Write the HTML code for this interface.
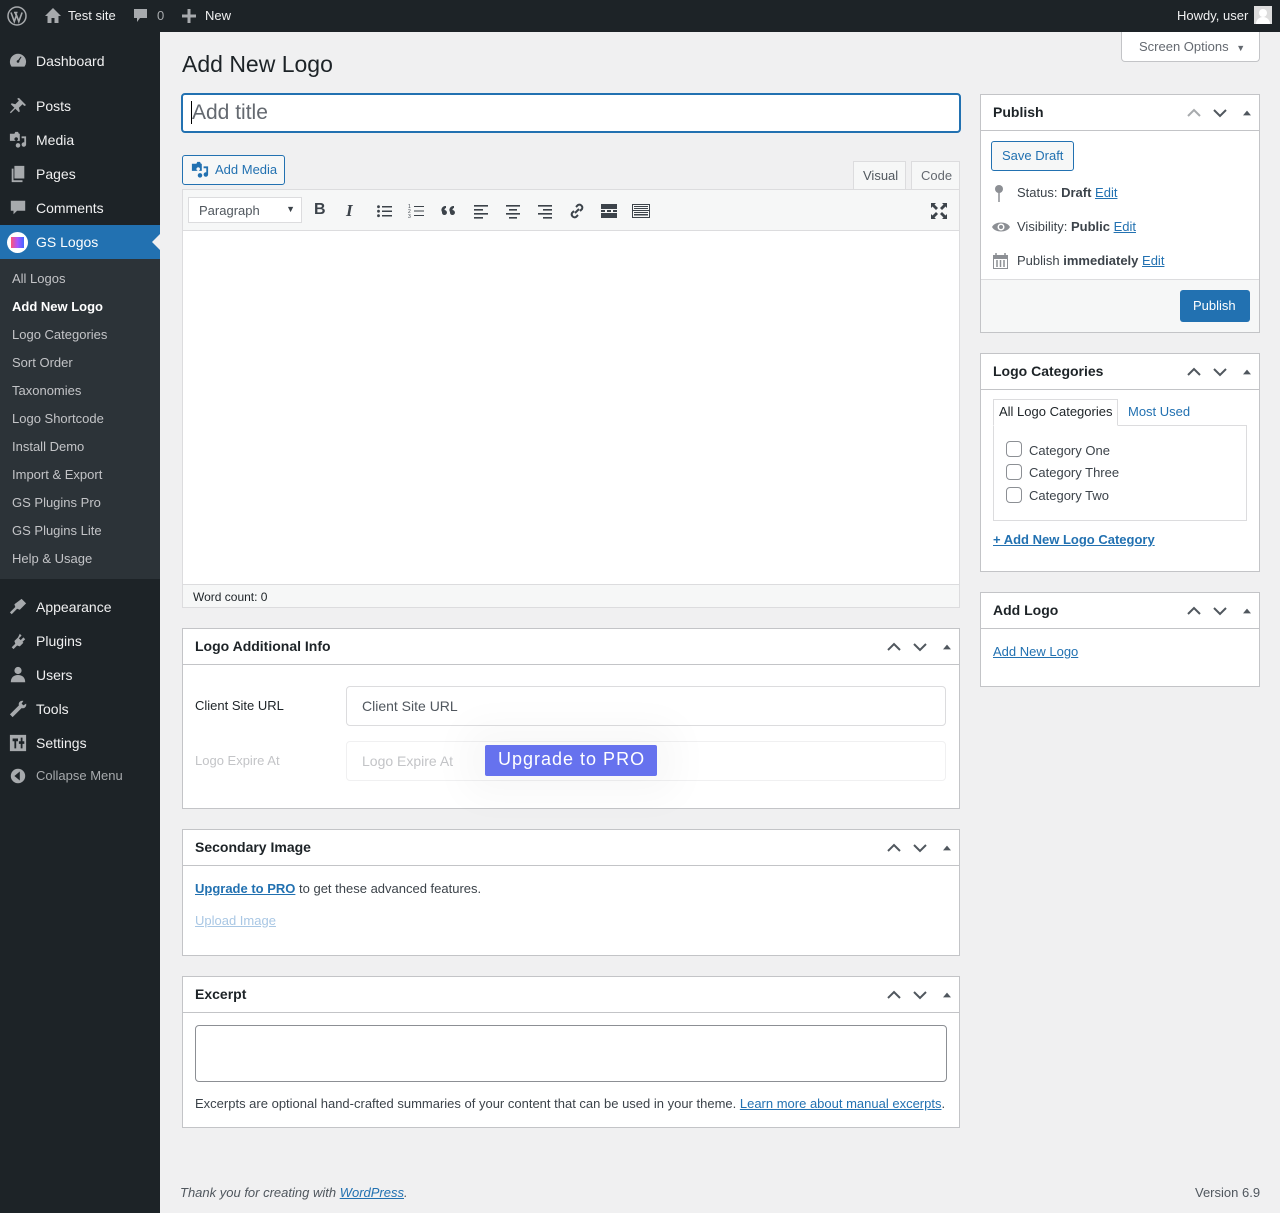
<!DOCTYPE html>
<html><head><meta charset="utf-8"><style>
*{box-sizing:border-box;margin:0;padding:0}
body{width:1280px;height:1213px;background:#f0f0f1;font-family:"Liberation Sans",sans-serif;font-size:13px;color:#3c434a;position:relative;overflow:hidden}
.a{position:absolute}
#bar{left:0;top:0;width:1280px;height:32px;background:#1d2327;color:#f0f0f1}
#side{left:0;top:32px;width:160px;height:1181px;background:#1d2327}
.mi{position:absolute;left:0;width:160px;height:34px;color:#f0f0f1;font-size:14px;line-height:34px;padding-left:36px}
.ic{position:absolute;left:9px;top:8px;width:18px;height:18px;fill:#a7aaad}
.sm{position:absolute;left:12px;color:#c3c4c7;font-size:13px}
.box{position:absolute;background:#fff;border:1px solid #c3c4c7}
.hd{height:36px;border-bottom:1px solid #c3c4c7;font-weight:bold;font-size:14px;color:#1d2327;padding:0 12px;line-height:35px;position:relative}
.arr{position:absolute;top:0;right:8px;height:35px;display:flex;align-items:center;gap:10px}
.arr svg{width:16px;height:16px}
.arr svg.t{width:8px;height:8px;margin-left:5px}
a,.lk{color:#2271b1;text-decoration:underline}
.tb svg{position:absolute;top:12px;width:18px;height:18px;fill:#3c434a}
</style></head><body>
<div id="bar" class="a">
 <svg class="a" style="left:7px;top:6px" width="20" height="20" viewBox="0 0 20 20"><circle cx="10" cy="10" r="9" fill="none" stroke="#a7aaad" stroke-width="1.5"/><path d="M4 6.5l3.3 9 2-5.8-1.2-3.2M8.5 6.5l3.3 9 3.3-9M7 6.5h3.5" stroke="#a7aaad" stroke-width="1.6" fill="none"/></svg>
 <svg class="a" style="left:44px;top:7px" width="18" height="17" viewBox="0 0 18 17"><path d="M9 1L1 9h2.5v7h4v-5h3v5h4V9H17z" fill="#a7aaad"/></svg>
 <span class="a" style="left:68px;top:8px">Test site</span>
 <svg class="a" style="left:133px;top:8px" width="15" height="16" viewBox="0 0 15 16"><path d="M1 1h13v9H7l-3 4v-4H1z" fill="#a7aaad"/></svg>
 <span class="a" style="left:157px;top:8px;color:#a7aaad">0</span>
 <svg class="a" style="left:182px;top:9px" width="14" height="14"><path d="M7 0v14M0 7h14" stroke="#a7aaad" stroke-width="3"/></svg>
 <span class="a" style="left:205px;top:8px">New</span>
 <span class="a" style="left:1177px;top:8px">Howdy, user</span>
 <div class="a" style="left:1254px;top:6px;width:18px;height:18px;background:#ddd"><div class="a" style="left:5px;top:3px;width:8px;height:8px;border-radius:50%;background:#fff"></div><div class="a" style="left:2px;top:11px;width:14px;height:7px;border-radius:7px 7px 0 0;background:#fff"></div></div>
</div>
<div id="side" class="a">
 <div class="mi" style="top:12px"><svg class="ic" viewBox="0 0 20 20"><path d="M10 2a9 9 0 0 0-9 9c0 2 .7 3.8 1.8 5.2h14.4A9 9 0 0 0 19 11a9 9 0 0 0-9-9zm0 10a1.5 1.5 0 1 1 .1-3l3-4 .8.5-2.5 4.3A1.5 1.5 0 0 1 10 12z"/></svg>Dashboard</div>
 <div class="mi" style="top:57px"><svg class="ic" viewBox="0 0 20 20"><path d="M11 1l8 8-2 1-2-2-4 4 1 4-1 1-4-4-5 5-1-1 5-5-4-4 1-1 4 1 4-4-2-2z"/></svg>Posts</div>
 <div class="mi" style="top:91px"><svg class="ic" viewBox="0 0 20 20"><path d="M1 3h5l1-2h3l1 2h1v8H1zm5 6a2 2 0 1 0 0-.1zM14 6h5v9a2.5 2.5 0 1 1-2-2.4V8h-3z"/><circle cx="10" cy="16" r="2.5"/></svg>Media</div>
 <div class="mi" style="top:125px"><svg class="ic" viewBox="0 0 20 20"><path d="M6 1h11v14H6zM3 4h2v13h10v2H3z"/></svg>Pages</div>
 <div class="mi" style="top:159px"><svg class="ic" viewBox="0 0 20 20"><path d="M2 2h16v11H9l-4 4v-4H2z"/></svg>Comments</div>
 <div class="mi" style="top:193px;background:#2271b1;color:#fff"><div class="a" style="left:7px;top:7px;width:21px;height:21px;border-radius:50%;background:#fff"></div><div class="a" style="left:11px;top:12px;width:13px;height:11px;background:linear-gradient(90deg,#f57,#a5f,#46f)"></div>GS Logos<div class="a" style="right:0;top:9px;width:0;height:0;border:8px solid transparent;border-right-color:#f0f0f1"></div></div>
 <div class="a" style="left:0;top:227px;width:160px;height:320px;background:#2c3338"></div>
 <div class="sm" style="top:239px">All Logos</div>
 <div class="sm" style="top:267px;color:#fff;font-weight:bold">Add New Logo</div>
 <div class="sm" style="top:295px">Logo Categories</div>
 <div class="sm" style="top:323px">Sort Order</div>
 <div class="sm" style="top:351px">Taxonomies</div>
 <div class="sm" style="top:379px">Logo Shortcode</div>
 <div class="sm" style="top:407px">Install Demo</div>
 <div class="sm" style="top:435px">Import &amp; Export</div>
 <div class="sm" style="top:463px">GS Plugins Pro</div>
 <div class="sm" style="top:491px">GS Plugins Lite</div>
 <div class="sm" style="top:519px">Help &amp; Usage</div>
 <div class="mi" style="top:558px"><svg class="ic" viewBox="0 0 20 20"><path d="M14 1l5 5-7 7-3-1-6 6-2-2 6-6-1-3z"/></svg>Appearance</div>
 <div class="mi" style="top:592px"><svg class="ic" viewBox="0 0 20 20"><path d="M12 2l2 2-3 3 2 2 3-3 2 2-3 3 1 1-4 4-3-1-4 4-2-2 4-4-1-3 4-4z"/></svg>Plugins</div>
 <div class="mi" style="top:626px"><svg class="ic" viewBox="0 0 20 20"><circle cx="10" cy="5" r="4"/><path d="M2 18c0-5 3-8 8-8s8 3 8 8z"/></svg>Users</div>
 <div class="mi" style="top:660px"><svg class="ic" viewBox="0 0 20 20"><path d="M16 1a4 4 0 0 0-5 5L1 16l3 3 10-10a4 4 0 0 0 5-5l-3 2-2-2z"/></svg>Tools</div>
 <div class="mi" style="top:694px"><svg class="ic" viewBox="0 0 20 20"><path d="M1 1h18v18H1zm3 4v3h2v8h2V8h2V5zm7 3v3h2v5h2v-5h2V8h-2V4h-2v4z"/></svg>Settings</div>
 <div class="mi" style="top:727px;font-size:13px;color:#a7aaad"><svg class="ic" viewBox="0 0 20 20"><circle cx="10" cy="10" r="8"/><path d="M12 5v10l-6-5z" fill="#1d2327"/></svg>Collapse Menu</div>
</div>

<div class="a" style="left:1121px;top:32px;width:139px;height:30px;background:#fff;border:1px solid #c3c4c7;border-top:0;border-radius:0 0 4px 4px;color:#646970;padding:7px 0 0 17px">Screen Options <span style="font-size:9px;margin-left:4px">▼</span></div>
<div class="a" style="left:182px;top:51px;font-size:23px;color:#1d2327">Add New Logo</div>
<div class="a" style="left:181px;top:93px;width:780px;height:40px;background:#fff;border:2px solid #2271b1;border-radius:4px;font-size:21px;color:#646970;padding:6px 8px"><span style="border-left:1px solid #000;padding-left:0">Add title</span></div>
<div class="a" style="left:182px;top:155px;width:103px;height:30px;border:1px solid #2271b1;border-radius:3px;background:#f6f7f7;color:#2271b1;padding:6px 0 0 32px">Add Media</div>
<svg class="a" style="left:191px;top:161px" width="18" height="18" viewBox="0 0 20 20" fill="#2271b1"><path d="M1 3h5l1-2h3l1 2h1v8H1zm5 6a2 2 0 1 0 0-.1zM14 6h5v9a2.5 2.5 0 1 1-2-2.4V8h-3z"/><circle cx="10" cy="16" r="2.5"/></svg>
<div class="a" style="left:853px;top:161px;width:53px;height:30px;background:#f6f7f7;border:1px solid #dcdcde;border-bottom:0;color:#50575e;padding:6px 0 0 9px">Visual</div>
<div class="a" style="left:911px;top:161px;width:49px;height:29px;background:#f6f7f7;border:1px solid #dcdcde;color:#646970;padding:6px 0 0 9px">Code</div>
<div class="a" style="left:182px;top:189px;width:778px;height:419px;border:1px solid #dcdcde;background:#fff">
 <div class="a tb" style="left:0;top:0;width:776px;height:41px;background:#f6f7f7;border-bottom:1px solid #dcdcde">
  <div class="a" style="left:5px;top:7px;width:114px;height:26px;background:#fff;border:1px solid #dcdcde;padding:5px 0 0 10px;color:#50575e">Paragraph<span class="a" style="right:6px;top:6px;font-size:9px;color:#3c434a">▼</span></div>
  <div class="a" style="left:131px;top:11px;font-weight:bold;font-size:16px;color:#3c434a">B</div>
  <div class="a" style="left:163px;top:11px;font-style:italic;font-family:'Liberation Serif';font-weight:bold;font-size:17px;color:#3c434a">I</div>
  <svg style="left:193px" viewBox="0 0 18 18"><path d="M6 4h10v1.5H6zM6 8.5h10V10H6zM6 13h10v1.5H6z"/><circle cx="2.5" cy="4.7" r="1.4"/><circle cx="2.5" cy="9.2" r="1.4"/><circle cx="2.5" cy="13.7" r="1.4"/></svg>
  <svg style="left:225px" viewBox="0 0 18 18"><path d="M6 4h10v1H6zM6 8.5h10v1H6zM6 13h10v1H6z"/><text x="0" y="6" font-size="5" font-family="Liberation Sans">1</text><text x="0" y="11" font-size="5" font-family="Liberation Sans">2</text><text x="0" y="16" font-size="5" font-family="Liberation Sans">3</text></svg>
  <svg style="left:257px" viewBox="0 0 18 18"><path d="M2 10a4 4 0 0 1 4-6v2a2 2 0 0 0-1.5 2A2.5 2.5 0 1 1 2 10zm8 0a4 4 0 0 1 4-6v2a2 2 0 0 0-1.5 2A2.5 2.5 0 1 1 10 10z"/></svg>
  <svg style="left:289px" viewBox="0 0 18 18"><path d="M2 3h14v1.6H2zM2 7h9v1.6H2zM2 11h14v1.6H2zM2 15h9v1.6H2z"/></svg>
  <svg style="left:321px" viewBox="0 0 18 18"><path d="M2 3h14v1.6H2zM5 7h8v1.6H5zM2 11h14v1.6H2zM5 15h8v1.6H5z"/></svg>
  <svg style="left:353px" viewBox="0 0 18 18"><path d="M2 3h14v1.6H2zM7 7h9v1.6H7zM2 11h14v1.6H2zM7 15h9v1.6H7z"/></svg>
  <svg style="left:385px" viewBox="0 0 18 18"><path d="M7 11l4-4M8 5l2-2a3 3 0 0 1 4 4l-2 2M10 13l-2 2a3 3 0 0 1-4-4l2-2" stroke="#3c434a" stroke-width="2" fill="none"/></svg>
  <svg style="left:417px" viewBox="0 0 18 18"><path d="M1 2h16v5H1zM1 8h4v2H1zM7 8h4v2H7zM13 8h4v2h-4zM1 11h16v5H1z"/></svg>
  <svg style="left:449px" viewBox="0 0 18 18"><path d="M0 2h18v14H0zm1 1v5h16V3zm0 6v6h16V9z"/><path d="M2 4h14v1H2zM2 6h14v1H2zM2 10h14v1H2zM2 12h14v1.5H2z"/></svg>
  <svg style="left:747px" viewBox="0 0 18 18"><path d="M1 1h5L4.5 2.5 8 6 6 8 2.5 4.5 1 6zM17 1v5l-1.5-1.5L12 8l-2-2 3.5-3.5L12 1zM1 17v-5l1.5 1.5L6 10l2 2-3.5 3.5L6 17zM17 17h-5l1.5-1.5L10 12l2-2 3.5 3.5L17 12z"/></svg>
 </div>
 <div class="a" style="left:0;top:394px;width:776px;height:23px;background:#f6f7f7;border-top:1px solid #dcdcde;font-size:12px;color:#1d2327;padding:5px 10px">Word count: 0</div>
</div>

<div class="box" style="left:182px;top:628px;width:778px;height:181px">
 <div class="hd">Logo Additional Info<div class="arr"><svg viewBox="0 0 16 16"><path d="M2 11l6-6 6 6" stroke="#50575e" stroke-width="2" fill="none"/></svg><svg viewBox="0 0 16 16"><path d="M2 5l6 6 6-6" stroke="#50575e" stroke-width="2" fill="none"/></svg><svg class="t" viewBox="0 0 10 10"><path d="M0 8l5-6 5 6z" fill="#50575e"/></svg></div></div>
 <div class="a" style="left:12px;top:69px;color:#1d2327">Client Site URL</div>
 <div class="a" style="left:163px;top:57px;width:600px;height:40px;border:1px solid #dcdcde;border-radius:4px;font-size:14px;color:#50575e;padding:11px 15px">Client Site URL</div>
 <div class="a" style="left:12px;top:124px;color:#c3c4c7">Logo Expire At</div>
 <div class="a" style="left:163px;top:112px;width:600px;height:40px;border:1px solid #f0f0f1;border-radius:4px;font-size:14px;color:#c3c4c7;padding:11px 15px">Logo Expire At</div>
 <div class="a" style="left:302px;top:116px;width:172px;height:31px;background:#6672ee;border-radius:2px;color:#fff;font-size:18px;letter-spacing:1px;padding:4px 0 0 13px;box-shadow:0 0 40px 20px rgba(0,0,0,.03)">Upgrade to PRO</div>
</div>

<div class="box" style="left:182px;top:829px;width:778px;height:127px">
 <div class="hd">Secondary Image<div class="arr"><svg viewBox="0 0 16 16"><path d="M2 11l6-6 6 6" stroke="#50575e" stroke-width="2" fill="none"/></svg><svg viewBox="0 0 16 16"><path d="M2 5l6 6 6-6" stroke="#50575e" stroke-width="2" fill="none"/></svg><svg class="t" viewBox="0 0 10 10"><path d="M0 8l5-6 5 6z" fill="#50575e"/></svg></div></div>
 <div class="a" style="left:12px;top:51px"><a style="font-weight:bold">Upgrade to PRO</a> to get these advanced features.</div>
 <div class="a" style="left:12px;top:83px;color:#a9c7e4;text-decoration:underline">Upload Image</div>
</div>

<div class="box" style="left:182px;top:976px;width:778px;height:152px">
 <div class="hd">Excerpt<div class="arr"><svg viewBox="0 0 16 16"><path d="M2 11l6-6 6 6" stroke="#50575e" stroke-width="2" fill="none"/></svg><svg viewBox="0 0 16 16"><path d="M2 5l6 6 6-6" stroke="#50575e" stroke-width="2" fill="none"/></svg><svg class="t" viewBox="0 0 10 10"><path d="M0 8l5-6 5 6z" fill="#50575e"/></svg></div></div>
 <div class="a" style="left:12px;top:48px;width:752px;height:57px;border:1px solid #8c8f94;border-radius:4px"></div>
 <div class="a" style="left:12px;top:119px">Excerpts are optional hand-crafted summaries of your content that can be used in your theme. <a>Learn more about manual excerpts</a>.</div>
</div>

<div class="box" style="left:980px;top:94px;width:280px;height:239px">
 <div class="hd">Publish<div class="arr"><svg viewBox="0 0 16 16"><path d="M2 11l6-6 6 6" stroke="#a7aaad" stroke-width="2" fill="none"/></svg><svg viewBox="0 0 16 16"><path d="M2 5l6 6 6-6" stroke="#50575e" stroke-width="2" fill="none"/></svg><svg class="t" viewBox="0 0 10 10"><path d="M0 8l5-6 5 6z" fill="#50575e"/></svg></div></div>
 <div class="a" style="left:10px;top:46px;width:83px;height:30px;border:1px solid #2271b1;border-radius:3px;background:#f6f7f7;color:#2271b1;padding:6px 0 0 10px">Save Draft</div>
 <svg class="a" style="left:13px;top:89px" width="10" height="18" viewBox="0 0 10 18"><circle cx="5" cy="5" r="4" fill="#8c8f94"/><path d="M5 8v10" stroke="#8c8f94" stroke-width="1.5"/></svg>
 <div class="a" style="left:36px;top:90px">Status: <b>Draft</b> <a>Edit</a></div>
 <svg class="a" style="left:10px;top:125px" width="20" height="14" viewBox="0 0 20 14"><path d="M1 7c3-6 15-6 18 0-3 6-15 6-18 0z" fill="#8c8f94"/><circle cx="10" cy="7" r="3.5" fill="#fff"/><circle cx="10" cy="7" r="2" fill="#8c8f94"/></svg>
 <div class="a" style="left:36px;top:124px">Visibility: <b>Public</b> <a>Edit</a></div>
 <svg class="a" style="left:11px;top:157px" width="17" height="17" viewBox="0 0 17 17" fill="#8c8f94"><path d="M1 3h15v14H1zm1 4v9h13V7z"/><path d="M4 1v4M13 1v4M5 8v7M8.5 8v7M12 8v7" stroke="#8c8f94" stroke-width="1.5"/></svg>
 <div class="a" style="left:36px;top:158px">Publish <b>immediately</b> <a>Edit</a></div>
 <div class="a" style="left:0;top:184px;width:278px;height:53px;background:#f6f7f7;border-top:1px solid #dcdcde"></div>
 <div class="a" style="left:199px;top:195px;width:70px;height:32px;background:#2271b1;border-radius:3px;color:#fff;padding:8px 0 0 13px">Publish</div>
</div>

<div class="box" style="left:980px;top:353px;width:280px;height:219px">
 <div class="hd">Logo Categories<div class="arr"><svg viewBox="0 0 16 16"><path d="M2 11l6-6 6 6" stroke="#50575e" stroke-width="2" fill="none"/></svg><svg viewBox="0 0 16 16"><path d="M2 5l6 6 6-6" stroke="#50575e" stroke-width="2" fill="none"/></svg><svg class="t" viewBox="0 0 10 10"><path d="M0 8l5-6 5 6z" fill="#50575e"/></svg></div></div>
 <div class="a" style="left:12px;top:71px;width:254px;height:96px;border:1px solid #dcdcde"></div>
 <div class="a" style="left:12px;top:45px;width:125px;height:27px;border:1px solid #dcdcde;border-bottom:1px solid #fff;background:#fff;color:#1d2327;padding:4px 0 0 5px">All Logo Categories</div>
 <div class="a" style="left:147px;top:50px;color:#2271b1">Most Used</div>
 <div class="a" style="left:25px;top:87px;width:16px;height:16px;border:1px solid #8c8f94;border-radius:4px"></div><div class="a" style="left:48px;top:89px">Category One</div>
 <div class="a" style="left:25px;top:110px;width:16px;height:16px;border:1px solid #8c8f94;border-radius:4px"></div><div class="a" style="left:48px;top:111px">Category Three</div>
 <div class="a" style="left:25px;top:133px;width:16px;height:16px;border:1px solid #8c8f94;border-radius:4px"></div><div class="a" style="left:48px;top:134px">Category Two</div>
 <a class="a" style="left:12px;top:178px;font-weight:bold">+ Add New Logo Category</a>
</div>

<div class="box" style="left:980px;top:592px;width:280px;height:95px">
 <div class="hd">Add Logo<div class="arr"><svg viewBox="0 0 16 16"><path d="M2 11l6-6 6 6" stroke="#50575e" stroke-width="2" fill="none"/></svg><svg viewBox="0 0 16 16"><path d="M2 5l6 6 6-6" stroke="#50575e" stroke-width="2" fill="none"/></svg><svg class="t" viewBox="0 0 10 10"><path d="M0 8l5-6 5 6z" fill="#50575e"/></svg></div></div>
 <a class="a" style="left:12px;top:51px">Add New Logo</a>
</div>

<div class="a" style="left:180px;top:1185px;font-style:italic;color:#50575e">Thank you for creating with <a>WordPress</a>.</div>
<div class="a" style="left:1195px;top:1185px;color:#50575e">Version 6.9</div>
</body></html>
